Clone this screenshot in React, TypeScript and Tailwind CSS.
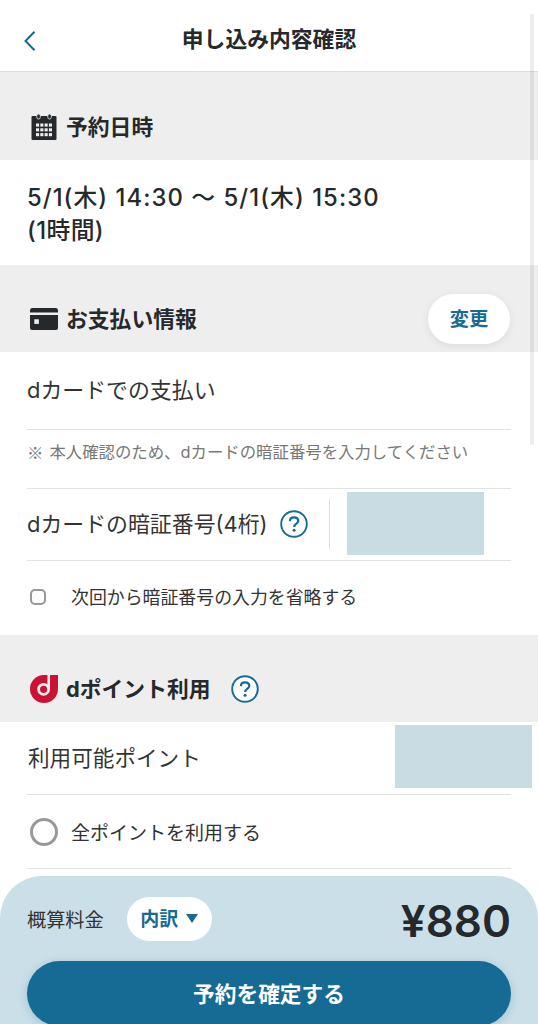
import { useState } from 'react';
import type { ReactNode } from 'react';

interface SectionHeaderProps {
  icon: ReactNode;
  title: string;
  children?: ReactNode;
}

function CalendarIcon() {
  return (
    <svg width="26" height="27" viewBox="0 0 26 27" className="shrink-0">
      <rect x="0.5" y="2" width="25" height="24" rx="1" fill="#26292c" />
      {[5.8, 16.8].map((x) => (
        <rect key={x} x={x} y="0" width="3.5" height="5" rx="1.75" fill="#26292c" stroke="#eeeeee" strokeWidth="0.8" />
      ))}
      {[9.5, 14.3, 19.1].map((y) =>
        [5, 9.3, 13.6, 17.9].map((x) => (
          <rect key={`${x}-${y}`} x={x} y={y} width="3.1" height="3.1" fill="#eeeeee" />
        ))
      )}
    </svg>
  );
}

function CardIcon() {
  return (
    <svg width="28" height="22" viewBox="0 0 28 22" className="shrink-0">
      <path d="M2.5 0h23A2.5 2.5 0 0 1 28 2.5V4.5H0V2.5A2.5 2.5 0 0 1 2.5 0Z" fill="#26292c" />
      <path d="M0 7h28v13a2 2 0 0 1-2 2H2A2 2 0 0 1 0 20Z" fill="#26292c" />
      <rect x="4.3" y="11.3" width="4.6" height="4.6" fill="#eeeeee" />
    </svg>
  );
}

function PointIcon() {
  return (
    <svg width="28" height="28" viewBox="0 0 28 28" className="shrink-0">
      <path d="M14 0H28V14A14 14 0 1 1 14 0Z" fill="#cb1235" />
      <path d="M18.7 0V14.3" fill="none" stroke="#eeeeee" strokeWidth="2.6" />
      <circle cx="13.6" cy="14.3" r="5" fill="none" stroke="#eeeeee" strokeWidth="2.8" />
    </svg>
  );
}

function HelpIcon({ fill = 'none' }: { fill?: string }) {
  return (
    <svg width="28" height="28" viewBox="0 0 28 28" fill="none" className="shrink-0">
      <circle cx="14" cy="14" r="12.8" fill={fill} stroke="#156b93" strokeWidth="1.9" />
      <path d="M9.9 11.2C9.9 8.7 11.6 7.3 14 7.3S18.3 8.7 18.3 10.9C18.3 13.7 14.2 13.7 14.2 17" stroke="#156b93" strokeWidth="2.2" />
      <circle cx="14.1" cy="20.2" r="1.5" fill="#156b93" />
    </svg>
  );
}

function SectionHeader({ icon, title, children }: SectionHeaderProps) {
  return (
    <div className="flex h-[87px] items-end bg-[#eeeeee] pr-7 pl-[29px]">
      <div className="flex h-[66px] w-full items-center">
        <span className="flex w-[29px] justify-center">{icon}</span>
        <h2 className="ml-2 pt-0.5 text-[21.8px] leading-none font-bold">{title}</h2>
        {children}
      </div>
    </div>
  );
}

export default function App() {
  const [skipPin, setSkipPin] = useState(false);
  const [useAllPoints, setUseAllPoints] = useState(false);

  return (
    <div className="relative flex h-[1024px] w-[538px] flex-col overflow-hidden bg-white font-['Inter','Noto_Sans_CJK_JP',sans-serif] whitespace-nowrap text-[#26292c]">
      <header className="flex h-[72px] shrink-0 items-center border-b border-[#dddddd] px-6">
        <button type="button" aria-label="戻る" className="w-8 pt-[10px]">
          <svg width="12" height="20" viewBox="0 0 12 20" fill="none">
            <path d="M10.5 0.8L1.5 10L10.5 19.2" stroke="#156b93" strokeWidth="2" />
          </svg>
        </button>
        <h1 className="flex-1 pt-[9px] pr-8 text-center text-[21.8px] leading-none font-bold">申し込み内容確認</h1>
      </header>

      <main className="h-[804px] shrink-0">
        <section>
          <div className="bg-[#eeeeee] pt-px">
            <SectionHeader icon={<CalendarIcon />} title="予約日時" />
          </div>
          <div className="h-[105px] pt-[21px] pl-[27px] text-[23.8px] leading-[33px] font-medium">
            <p className="tracking-[1.07px]">5/1(木) 14:30 〜 5/1(木) 15:30</p>
            <p className="tracking-[0.4px]">(1時間)</p>
          </div>
        </section>

        <section>
          <SectionHeader icon={<CardIcon />} title="お支払い情報">
            <button
              type="button"
              className="ml-auto h-[50px] w-[82px] rounded-full bg-white pt-px text-[19.3px] font-bold text-[#156b93] shadow-[0_2px_8px_rgba(0,0,0,0.08)]"
            >
              変更
            </button>
          </SectionHeader>
          <div className="px-[27px] text-[#333333]">
            <p className="flex h-[78px] items-center border-b border-[#e2e2e2] text-[21.9px]">dカードでの支払い</p>
            <p className="flex h-[59px] items-start border-b border-[#e2e2e2] pt-[10px] text-[16.4px] text-[#777777]">
              <span className="mr-1.5 font-['Noto_Sans_CJK_JP',sans-serif] leading-[25px]">※</span>
              本人確認のため、dカードの暗証番号を入力してください
            </p>
            <div className="flex h-[72px] items-center border-b border-[#e2e2e2] pb-0.5">
              <label className="pt-0.5 text-[21.9px]">dカードの暗証番号(4桁)</label>
              <span className="ml-3"><HelpIcon /></span>
              <span className="ml-[21px] h-[50px] w-px bg-[#dedede]" />
              <div className="ml-[17px] h-[63px] w-[137px] bg-[#c9dbe3]" />
            </div>
            <label className="flex h-[74px] items-center pb-0.5 text-[17.9px]">
              <input
                type="checkbox"
                checked={skipPin}
                onChange={(e) => setSkipPin(e.target.checked)}
                className="ml-[3px] size-4 appearance-none rounded-[5px] border-2 border-[#999999] checked:bg-[#156b93]"
              />
              <span className="ml-[25px] pt-[3px]">次回から暗証番号の入力を省略する</span>
            </label>
          </div>
        </section>

        <section>
          <SectionHeader icon={<PointIcon />} title="dポイント利用">
            <span className="ml-5"><HelpIcon fill="#ffffff" /></span>
          </SectionHeader>
          <div className="px-[27px] text-[#333333]">
            <div className="flex h-[73px] items-center justify-between border-b border-[#e2e2e2]">
              <p className="pt-px pl-px text-[21.6px]">利用可能ポイント</p>
              <div className="-mr-[21px] mb-1 h-[63px] w-[137px] bg-[#c9dbe3]" />
            </div>
            <label className="flex h-[74px] items-center border-b border-[#e2e2e2] text-[19px]">
              <input
                type="radio"
                checked={useAllPoints}
                onChange={(e) => setUseAllPoints(e.target.checked)}
                className="ml-[3px] size-7 appearance-none rounded-full border-3 border-[#999999] checked:bg-[#156b93]"
              />
              <span className="ml-[13px] pt-[5px]">全ポイントを利用する</span>
            </label>
          </div>
        </section>
      </main>

      <footer className="h-[170px] shrink-0 rounded-t-[42px] bg-[#cbdfe8] px-[27px]">
        <div className="flex h-[85px] items-center">
          <span className="pt-[3px] text-[19.2px] text-[#333333]">概算料金</span>
          <button
            type="button"
            className="ml-[23px] flex h-11 w-[85px] items-center justify-center gap-2 rounded-full bg-white text-[19px] font-bold text-[#156b93]"
          >
            <span className="pt-[3px]">内訳</span>
            <svg width="12" height="9" viewBox="0 0 12 9">
              <path d="M0 0H12L6 9Z" fill="#156b93" />
            </svg>
          </button>
          <span className="ml-auto pt-1 text-[44px] font-semibold">¥880</span>
        </div>
        <button
          type="button"
          className="h-[65px] w-full rounded-full bg-[#156b93] pt-0.5 text-[21.7px] font-bold text-white shadow-[0_2px_10px_rgba(21,107,147,0.25)]"
        >
          予約を確定する
        </button>
      </footer>

      {/* scroll indicator */}
      <div className="absolute top-[14px] right-1 h-[431px] w-1 rounded-full bg-black/7" />
    </div>
  );
}
